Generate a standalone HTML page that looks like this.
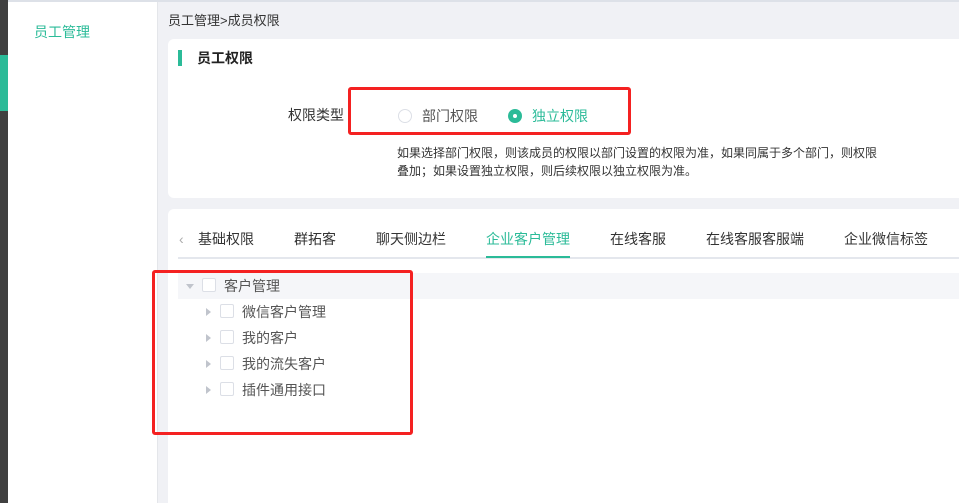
<!DOCTYPE html><html><head><meta charset="utf-8"><style>
*{margin:0;padding:0;box-sizing:border-box}
html,body{width:959px;height:503px;overflow:hidden}
body{background:#f0f1f5;position:relative;font-family:"Liberation Sans","Noto Sans CJK SC",sans-serif;color:#333}
.a{position:absolute}
.t{font-size:14px;white-space:nowrap;line-height:16px}
.cb{position:absolute;width:14px;height:14px;border:1px solid #dcdfe6;border-radius:2px;background:#fff}
.tri{position:absolute;width:0;height:0;border-top:4px solid transparent;border-bottom:4px solid transparent;border-left:5px solid #c0c4cc}
</style></head><body>
<div class="a" style="left:0;top:0;width:959px;height:2px;background:#dde1e8"></div>
<div class="a" style="left:0;top:0;width:8px;height:503px;background:#404040"></div>
<div class="a" style="left:0;top:55px;width:8px;height:56px;background:#2bbb98"></div>
<div class="a" style="left:8px;top:2px;width:150px;height:501px;background:#fff;border-right:1px solid #e4e6ea"></div>
<div class="a t" style="left:34px;top:24px;color:#2bbb98;font-size:14px">员工管理</div>
<div class="a t" style="left:168px;top:13px;font-size:13px;color:#333">员工管理&gt;成员权限</div>
<div class="a" style="left:168px;top:39px;width:800px;height:159px;background:#fff;border-radius:6px"></div>
<div class="a" style="left:178px;top:50px;width:4px;height:16px;background:#2bbb98"></div>
<div class="a t" style="left:197px;top:50px;font-weight:bold;color:#222">员工权限</div>
<div class="a t" style="left:288px;top:107px;color:#333">权限类型</div>
<div class="a" style="left:398px;top:109px;width:14px;height:14px;border:1px solid #dcdfe6;border-radius:50%"></div>
<div class="a t" style="left:422px;top:108px;color:#555">部门权限</div>
<div class="a" style="left:508px;top:109px;width:14px;height:14px;border-radius:50%;background:#2bbb98"></div>
<div class="a" style="left:513px;top:114px;width:4px;height:4px;border-radius:50%;background:#fff"></div>
<div class="a t" style="left:532px;top:108px;color:#2bbb98">独立权限</div>
<div class="a" style="left:348px;top:87px;width:283px;height:48px;border:3px solid #f42121;border-radius:3px"></div>
<div class="a" style="left:397px;top:144px;font-size:12px;line-height:18px;color:#333;white-space:nowrap">如果选择部门权限，则该成员的权限以部门设置的权限为准，如果同属于多个部门，则权限<br>叠加；如果设置独立权限，则后续权限以独立权限为准。</div>
<div class="a" style="left:168px;top:209px;width:800px;height:300px;background:#fff;border-radius:6px"></div>
<div class="a t" style="left:179px;top:231px;color:#aaa">‹</div>
<div class="a t" style="left:198px;top:231px">基础权限</div>
<div class="a t" style="left:294px;top:231px">群拓客</div>
<div class="a t" style="left:376px;top:231px">聊天侧边栏</div>
<div class="a t" style="left:486px;top:231px;color:#2bbb98">企业客户管理</div>
<div class="a t" style="left:610px;top:231px">在线客服</div>
<div class="a t" style="left:706px;top:231px">在线客服客服端</div>
<div class="a t" style="left:844px;top:231px">企业微信标签</div>
<div class="a" style="left:178px;top:257px;width:781px;height:2px;background:#e4e7ed"></div>
<div class="a" style="left:486px;top:256px;width:84px;height:2px;background:#2bbb98"></div>
<div class="a" style="left:178px;top:273px;width:781px;height:26px;background:#f5f6f9"></div>
<div class="a" style="left:186px;top:284px;width:0;height:0;border-left:4px solid transparent;border-right:4px solid transparent;border-top:5px solid #c0c4cc"></div>
<div class="cb" style="left:202px;top:278px"></div>
<div class="a t" style="left:224px;top:278px;color:#555">客户管理</div>
<div class="tri" style="left:206px;top:308px"></div><div class="cb" style="left:220px;top:304px"></div><div class="a t" style="left:242px;top:304px;color:#555">微信客户管理</div>
<div class="tri" style="left:206px;top:334px"></div><div class="cb" style="left:220px;top:330px"></div><div class="a t" style="left:242px;top:330px;color:#555">我的客户</div>
<div class="tri" style="left:206px;top:360px"></div><div class="cb" style="left:220px;top:356px"></div><div class="a t" style="left:242px;top:356px;color:#555">我的流失客户</div>
<div class="tri" style="left:206px;top:386px"></div><div class="cb" style="left:220px;top:382px"></div><div class="a t" style="left:242px;top:382px;color:#555">插件通用接口</div>
<div class="a" style="left:152px;top:270px;width:261px;height:165px;border:3px solid #f42121;border-radius:3px"></div>
</body></html>
